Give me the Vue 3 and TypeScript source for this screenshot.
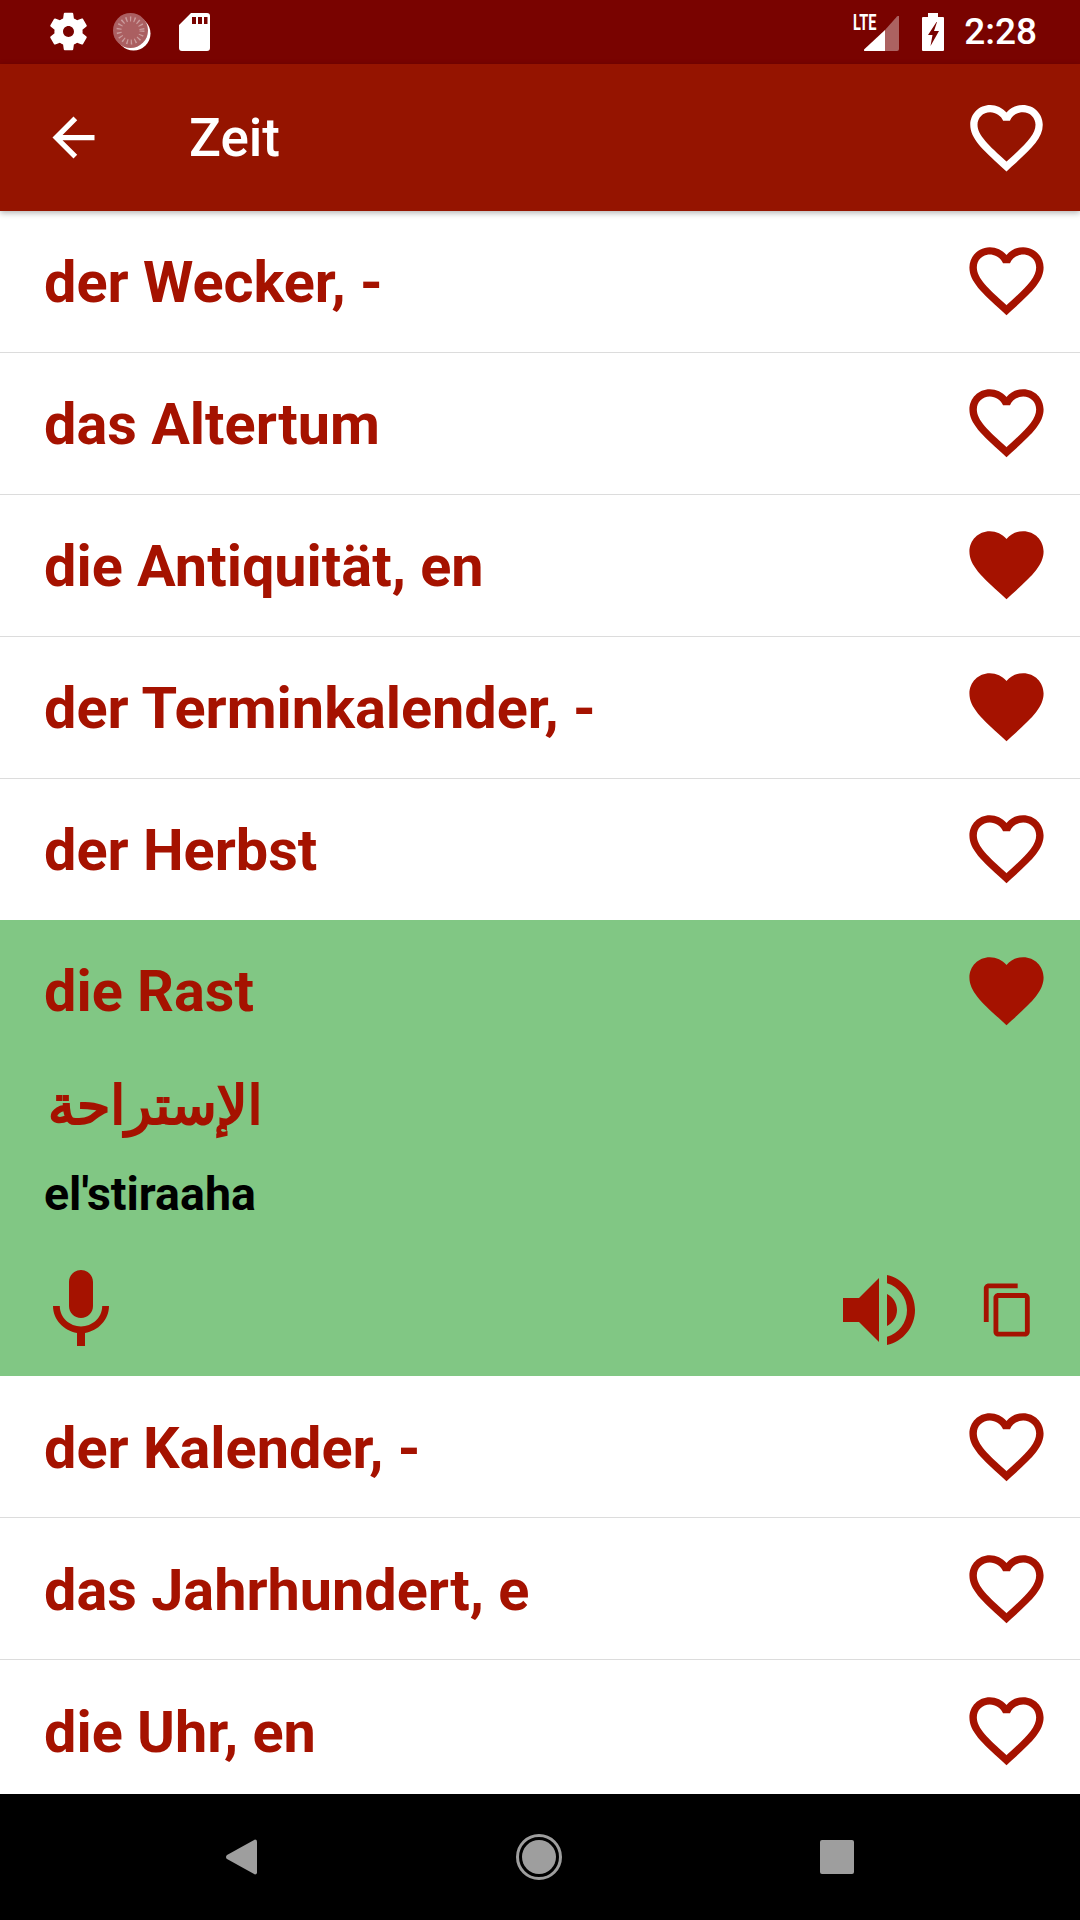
<script setup lang="ts">
interface Word { text: string; fav: boolean }
const before: Word[] = [
  { text: 'der Wecker, -', fav: false },
  { text: 'das Altertum', fav: false },
  { text: 'die Antiquität, en', fav: true },
  { text: 'der Terminkalender, -', fav: true },
  { text: 'der Herbst', fav: false },
]
const after: Word[] = [
  { text: 'der Kalender, -', fav: false },
  { text: 'das Jahrhundert, e', fav: false },
  { text: 'die Uhr, en', fav: false },
]
const outline = 'M16.5 3c-1.74 0-3.41.81-4.5 2.09C10.91 3.81 9.24 3 7.5 3 4.42 3 2 5.42 2 8.5c0 3.78 3.4 6.86 8.55 11.54L12 21.35l1.45-1.32C18.6 15.36 22 12.28 22 8.5 22 5.42 19.58 3 16.5 3zm-4.4 15.55l-.1.1-.1-.1C7.14 14.24 4 11.39 4 8.5 4 6.5 5.5 5 7.5 5c1.54 0 3.04.99 3.57 2.36h1.87C13.46 5.99 14.96 5 16.5 5c2 0 3.5 1.5 3.5 3.5 0 2.89-3.14 5.74-7.9 10.05z'
const filled = 'M12 21.35l-1.45-1.32C5.4 15.36 2 12.28 2 8.5 2 5.42 4.42 3 7.5 3c1.74 0 3.41.81 4.5 2.09C13.09 3.81 14.76 3 16.5 3 19.58 3 22 5.42 22 8.5c0 3.78-3.4 6.86-8.55 11.54L12 21.35z'
</script>

<template>
  <div class="screen">
    <header class="status">
      <div class="status-left">
        <svg class="gear" viewBox="0 0 24 24"><path fill="#fff" fill-rule="evenodd" d="M19.14 12.94c.04-.3.06-.61.06-.94 0-.32-.02-.64-.07-.94l2.03-1.58c.18-.14.23-.41.12-.61l-1.92-3.32c-.12-.22-.37-.29-.59-.22l-2.39.96c-.5-.38-1.03-.7-1.62-.94l-.36-2.54c-.04-.24-.24-.41-.48-.41h-3.84c-.24 0-.43.17-.47.41l-.36 2.54c-.59.24-1.13.57-1.62.94l-2.39-.96c-.22-.08-.47 0-.59.22L2.74 8.87c-.12.21-.08.47.12.61l2.03 1.58c-.05.3-.09.63-.09.94s.02.64.07.94l-2.03 1.58c-.18.14-.23.41-.12.61l1.92 3.32c.12.22.37.29.59.22l2.39-.96c.5.38 1.03.7 1.62.94l.36 2.54c.05.24.24.41.48.41h3.84c.24 0 .44-.17.47-.41l.36-2.54c.59-.24 1.13-.56 1.62-.94l2.39.96c.22.08.47 0 .59-.22l1.92-3.32c.12-.22.07-.47-.12-.61l-2.01-1.58zM12 14.8c-1.55 0-2.8-1.25-2.8-2.8s1.25-2.8 2.8-2.8 2.8 1.25 2.8 2.8-1.25 2.8-2.8 2.8z"/></svg>
        <svg class="disc" viewBox="0 0 38 38">
          <circle cx="20.500" cy="20.500" r="17" fill="#fff"/>
          <circle cx="17.500" cy="17.500" r="17.500" fill="#ab5f61"/>
          <circle cx="17.500" cy="17.500" r="11.500" fill="none" stroke="#cb9d9e" stroke-width="5" stroke-dasharray="1.300 2.800"/>
        </svg>
        <svg class="sd" viewBox="0 0 31 38"><path fill="#fff" fill-rule="evenodd" d="M12 0h16a3 3 0 0 1 3 3v32a3 3 0 0 1-3 3H3a3 3 0 0 1-3-3V12zM13 4v7h4V4zM19 4v7h4V4zM25 4v7h3.5V4z"/></svg>
      </div>
      <div class="status-right">
        <div class="signal">
          <span class="lte">LTE</span>
          <svg class="bars" viewBox="0 0 35 35"><path fill="#fff" fill-opacity=".38" d="M35 0v33a2 2 0 0 1-2 2H21V14L33 .5C34 -.5 35 0 35 0z"/><path fill="#fff" d="M21 14v21H1c-1 0-1.4-1-.7-1.7z"/></svg>
        </div>
        <svg class="battery" viewBox="0 0 22 38"><path fill="#fff" fill-rule="evenodd" d="M6 0h10v4h5a1 1 0 0 1 1 1v32a1 1 0 0 1-1 1H1a1 1 0 0 1-1-1V5a1 1 0 0 1 1-1h5zM14.500 9L6 22h4.500l-2 11L17 18h-5l3-9z"/></svg>
        <span class="time">2:28</span>
      </div>
    </header>

    <div class="toolbar">
      <svg class="back" viewBox="0 0 24 24"><path fill="#fff" d="M20 11H7.830l5.590-5.590L12 4l-8 8 8 8 1.410-1.410L7.830 13H20v-2z"/></svg>
      <h1 class="title">Zeit</h1>
      <svg class="bar-heart" viewBox="0 0 24 24"><path fill="#fff" :d="outline"/></svg>
    </div>

    <main class="list">
      <div v-for="w in before" :key="w.text" class="row">
        <span class="word">{{ w.text }}</span>
        <svg class="heart" viewBox="0 0 24 24"><path :d="w.fav ? filled : outline"/></svg>
      </div>

      <section class="open">
        <div class="open-head">
          <span class="word">die Rast</span>
          <svg class="heart" viewBox="0 0 24 24"><path :d="filled"/></svg>
        </div>
        <div class="arabic" dir="rtl">الإستراحة</div>
        <div class="translit">el'stiraaha</div>
        <div class="actions">
          <svg class="mic" viewBox="0 0 24 24"><path d="M12 14c1.660 0 3-1.340 3-3V5c0-1.660-1.340-3-3-3S9 3.340 9 5v6c0 1.660 1.340 3 3 3zm5.300-3c0 3-2.540 5.100-5.300 5.100S6.700 14 6.700 11H5c0 3.410 2.720 6.230 6 6.720V21h2v-3.280c3.280-.48 6-3.300 6-6.720h-1.700z"/></svg>
          <svg class="speaker" viewBox="0 0 24 24"><path d="M3 9v6h4l5 5V4L7 9H3zm13.500 3c0-1.770-1.020-3.290-2.500-4.030v8.050c1.480-.73 2.500-2.250 2.500-4.020zM14 3.230v2.060c2.890.86 5 3.540 5 6.710s-2.110 5.850-5 6.710v2.060c4.010-.91 7-4.490 7-8.770s-2.990-7.860-7-8.770z"/></svg>
          <svg class="copy" viewBox="0 0 24 24"><path d="M16 1H4c-1.100 0-2 .9-2 2v14h2V3h12V1zm3 4H8c-1.100 0-2 .9-2 2v14c0 1.100.9 2 2 2h11c1.100 0 2-.9 2-2V7c0-1.100-.9-2-2-2zm0 16H8V7h11v14z"/></svg>
        </div>
      </section>

      <div v-for="w in after" :key="w.text" class="row row-low">
        <span class="word">{{ w.text }}</span>
        <svg class="heart" viewBox="0 0 24 24"><path :d="w.fav ? filled : outline"/></svg>
      </div>
    </main>

    <footer class="nav">
      <svg class="nav-back" viewBox="0 0 31 36"><path fill="#9e9e9e" d="M29 0.500a2 2 0 0 1 2 2v31a2 2 0 0 1-2 2L1 20a2.500 2.500 0 0 1 0-4z"/></svg>
      <div class="nav-home"><span class="nav-dot"></span></div>
      <div class="nav-square"></div>
    </footer>
  </div>
</template>

<style scoped>
.screen {
  width: 1080px;
  height: 1920px;
  display: flex;
  flex-direction: column;
  overflow: hidden;
  background: #fff;
  font-family: Roboto, "Liberation Sans", sans-serif;
}
.status {
  height: 63px;
  flex: none;
  background: #790300;
  display: flex;
  align-items: center;
  justify-content: space-between;
  padding: 0 43px 1px 50px;
}
.status-left { display: flex; align-items: center; }
.gear { width: 47px; height: 47px; margin: 0 0 0 -5px; }
.disc { width: 38px; height: 38px; margin-left: 21px; }
.sd { width: 31px; height: 38px; margin-left: 28px; }
.status-right { display: flex; align-items: center; }
.signal { position: relative; width: 46px; height: 38px; margin-right: 23px; }
.lte {
  position: absolute;
  left: 0;
  top: -1px;
  color: #fff;
  font: 700 22px/22px Roboto, sans-serif;
  transform: scaleX(.66);
  transform-origin: left top;
}
.bars { position: absolute; right: 0; bottom: 0; width: 35px; height: 35px; }
.battery { width: 22px; height: 38px; margin-right: 20px; }
.time { color: #fff; font-size: 37px; font-weight: 500; line-height: 40px; }

.toolbar {
  height: 147px;
  flex: none;
  position: relative;
  z-index: 1;
  background: #951400;
  box-shadow: 0 2px 6px rgba(0, 0, 0, .3);
  display: flex;
  align-items: center;
  padding: 0 32px 0 42px;
}
.back { width: 63px; height: 63px; flex: none; }
.title {
  margin: 0 0 0 84px;
  flex: 1;
  color: #fff;
  font-size: 53px;
  font-weight: 500;
  line-height: 58px;
}
.bar-heart { width: 87px; height: 87px; flex: none; margin-right: -2px; }

.list { flex: 1; min-height: 0; overflow: hidden; }
.row {
  height: 142px;
  box-sizing: border-box;
  border-bottom: 1px solid #dcdcdc;
  display: flex;
  align-items: center;
  justify-content: space-between;
  padding: 0 29px 0 44px;
}
.row-low { padding-top: 2px; }
.word {
  color: #a51200;
  font-size: 57.6px;
  font-weight: 700;
  line-height: 66px;
  padding-top: 2px;
}
.heart { width: 89px; height: 89px; flex: none; fill: #a51200; margin-top: -2px; }

.open {
  height: 456px;
  margin-top: -1px;
  position: relative;
  box-sizing: border-box;
  background: #81c784;
  padding: 0 29px 0 44px;
  display: flex;
  flex-direction: column;
}
.open-head {
  height: 142px;
  flex: none;
  display: flex;
  align-items: center;
  justify-content: space-between;
}
.arabic {
  align-self: flex-start;
  color: #a51200;
  font-family: "DejaVu Sans", sans-serif;
  font-size: 54px;
  line-height: 64px;
  -webkit-text-stroke: 2.2px #a51200;
  margin: 12px 0 0 4px;
}
.translit {
  color: #000;
  font-size: 46.5px;
  font-weight: 700;
  line-height: 52px;
  margin-top: 30px;
}
.actions {
  display: flex;
  align-items: center;
  margin: 42px -29px 0 -11px;
  padding-right: 3px;
}
.mic { width: 96px; height: 96px; fill: #a51200; margin-right: auto; }
.speaker { width: 96px; height: 96px; fill: #a51200; margin-right: 52px; }
.copy { width: 58px; height: 58px; fill: #a51200; margin-right: 40px; }

.nav {
  height: 126px;
  flex: none;
  background: #000;
  display: grid;
  grid-template-columns: repeat(3, 298px);
  justify-content: center;
  justify-items: center;
  align-items: center;
  padding-right: 2px;
}
.nav-back { width: 31px; height: 36px; }
.nav-home {
  width: 46px;
  height: 46px;
  box-sizing: border-box;
  border: 3px solid #9e9e9e;
  border-radius: 50%;
  display: flex;
  align-items: center;
  justify-content: center;
}
.nav-dot { width: 34px; height: 34px; border-radius: 50%; background: #9e9e9e; }
.nav-square { width: 34px; height: 34px; border-radius: 2px; background: #9e9e9e; }
</style>

<style>
html, body { margin: 0; padding: 0; }
</style>
